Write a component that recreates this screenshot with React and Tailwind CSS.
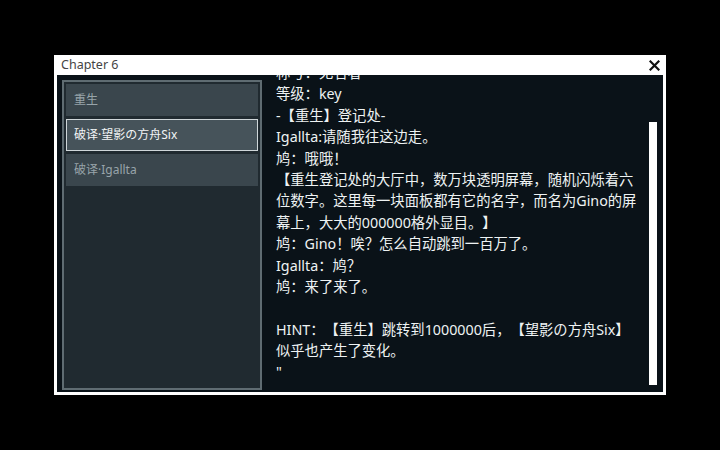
import React from 'react';

const font = { fontFamily: '"Noto Sans", "Noto Sans CJK SC", sans-serif' };

const chapters = [
    { label: '重生', active: false },
    { label: '破译·望影の方舟Six', active: true },
    { label: '破译·Igallta', active: false },
];

const lines = [
    '称号：无名者',
    '等级：key',
    '-【重生】登记处-',
    'Igallta:请随我往这边走。',
    '鸠：哦哦！',
    '【重生登记处的大厅中，数万块透明屏幕，随机闪烁着六',
    '位数字。这里每一块面板都有它的名字，而名为Gino的屏',
    '幕上，大大的000000格外显目。】',
    '鸠：Gino！唉？怎么自动跳到一百万了。',
    'Igallta：鸠？',
    '鸠：来了来了。',
    '',
    'HINT：【重生】跳转到1000000后，【望影の方舟Six】',
    '似乎也产生了变化。',
    '"',
];

export default function App() {
    return (
        <div className="w-[720px] h-[450px] bg-black pt-[55px] pl-[54px] [text-spacing-trim:space-all]" style={font}>
            <div className="w-[612px] h-[340px] bg-white flex flex-col px-[3px] pb-[3px]">
                {/* Title bar */}
                <div className="h-[20px] flex items-center justify-between pl-[4px] pr-[3px] pt-[1px]">
                    <span className="text-[12.5px] text-[#444] leading-none">Chapter 6</span>
                    <svg width="11" height="11" viewBox="0 0 11 11">
                        <path d="M1.5 1.5 L9.5 9.5 M9.5 1.5 L1.5 9.5" stroke="#111" strokeWidth="2.2" strokeLinecap="square" />
                    </svg>
                </div>

                {/* Body */}
                <div className="flex-1 bg-[#0a1218] flex pt-[5px] pl-[5px] pb-[2px] pr-[6px]">
                    {/* Chapter list */}
                    <div className="w-[200px] border-2 border-[#5f6c72] bg-[#202a30] p-[2px] flex flex-col gap-[3px]">
                        {chapters.map((c) => (
                            <div
                                key={c.label}
                                className={
                                    c.active
                                        ? 'h-[32px] flex items-center pl-[7px] bg-[#46535a] border border-[#cfd6d9] text-[12px] text-[#f2f5f6]'
                                        : 'h-[32px] flex items-center pl-[8px] bg-[#3a464d] text-[12px] text-[#98a4aa]'
                                }
                            >
                                {c.label}
                            </div>
                        ))}
                    </div>

                    {/* Text area */}
                    <div className="flex-1 flex overflow-hidden -mt-[5px]">
                        <div className="flex-1 overflow-hidden pl-[14px]">
                            <div className="-mt-[13px] text-[14.3px] leading-[21.4px] text-[#eef2f3]">
                                {lines.map((l, i) => (
                                    <div key={i} className="whitespace-nowrap h-[21.4px]">{l}</div>
                                ))}
                            </div>
                        </div>
                        {/* Scrollbar */}
                        <div className="w-[8px] pt-[47px] pb-[5px] flex flex-col">
                            <div className="flex-1 bg-white" />
                        </div>
                    </div>
                </div>
            </div>
        </div>
    );
}
